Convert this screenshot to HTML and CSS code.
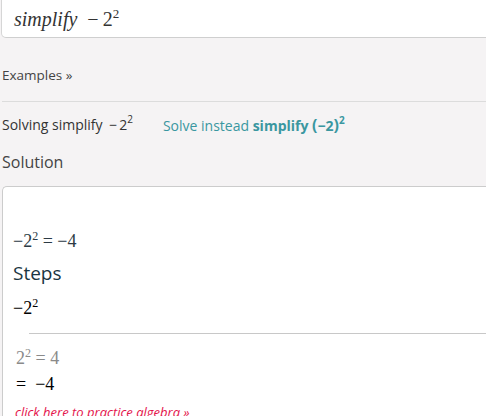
FILE: index.html
```html
<!DOCTYPE html>
<html>
<head>
<meta charset="utf-8">
<link rel="stylesheet" href="styles.css">
</head>
<body>
<div class="page">
  <div class="input"><span class="it">simplify</span><span class="op">−</span>2<sup>2</sup></div>
  <div class="examples">Examples »</div>
  <div class="solving">
    <span>Solving simplify <span class="m">−</span>2<sup>2</sup></span>
    <span class="instead">Solve instead <b>simplify <span class="paren">(</span>−2<span class="paren">)</span><sup>2</sup></b></span>
  </div>
  <div class="solution-title">Solution</div>
  <div class="card">
    <div class="result math">−2<sup>2</sup> = −4</div>
    <div class="steps-title">Steps</div>
    <div class="step math black">−2<sup>2</sup></div>
    <div class="rule"></div>
    <div class="step math gray">2<sup>2</sup> = 4</div>
    <div class="step math black eq">=&nbsp; −4</div>
    <div class="practice">click here to practice algebra »</div>
  </div>
</div>
</body>
</html>
```
FILE: styles.css
```css
html, body {
  margin: 0;
  padding: 0;
  overflow: hidden;
}
body {
  background: #f5f3f4;
  font-family: "Open Sans", "Noto Sans", sans-serif;
  color: #333;
}
.page {
  width: 700px;
}
.input {
  margin-left: 1px;
  height: 38px;
  box-sizing: border-box;
  background: #fff;
  border-left: 1px solid #d6d6d6;
  border-bottom: 1px solid #cfcfcf;
  border-bottom-left-radius: 5px;
  padding: 5px 0 0 12px;
  font-family: "Liberation Serif", serif;
  font-size: 20px;
  color: #333;
  line-height: 28px;
}
.input .it {
  font-style: italic;
  margin-right: 10px;
}
.input .op {
  margin-right: 4px;
}
.input sup {
  font-size: 13px;
  vertical-align: 8px;
  line-height: 0;
}
.examples {
  margin: 27px 0 0 2px;
  font-size: 13.5px;
  line-height: 20px;
  color: #444;
}
.solving {
  margin: 16px 0 0 2px;
  border-top: 1px solid #dcdcdc;
  padding-top: 13px;
  font-size: 14px;
  line-height: 20px;
  color: #333;
  display: flex;
  gap: 30px;
}
.solving sup {
  font-size: 10px;
  vertical-align: 7px;
  line-height: 0;
}
.solving .m {
  margin: 0 2px 0 3px;
}
.instead {
  color: #3a97a0;
}
.instead b {
  font-weight: 700;
}
.instead .paren {
  font-size: 16px;
}
.solution-title {
  margin: 15px 0 0 2px;
  font-size: 16px;
  line-height: 22px;
  color: #444;
}
.card {
  margin: 13px 0 0 2px;
  background: #fff;
  border-top: 1px solid #cccccc;
  border-left: 1px solid #cccccc;
  border-top-left-radius: 5px;
  padding: 43px 0 0 10px;
  height: 300px;
}
.math {
  font-family: "Liberation Serif", serif;
  font-size: 18px;
  line-height: 22px;
}
.math sup {
  font-size: 12px;
  vertical-align: 7px;
  line-height: 0;
}
.result {
  color: #2c3a45;
}
.steps-title {
  margin-top: 8px;
  font-size: 19px;
  line-height: 26px;
  color: #1a3542;
}
.step {
  margin-top: 11px;
}
.black {
  color: #000;
}
.rule {
  margin: 14px 0 0 16px;
  border-top: 1px solid #c8c8c8;
}
.step.gray {
  color: #8a8a8a;
  margin-top: 13px;
  padding-left: 3px;
}
.step.eq {
  margin-top: 4px;
  padding-left: 3px;
}
.practice {
  margin-top: 8px;
  padding-left: 2px;
  font-size: 13px;
  font-style: italic;
  color: #e4144c;
}
```
